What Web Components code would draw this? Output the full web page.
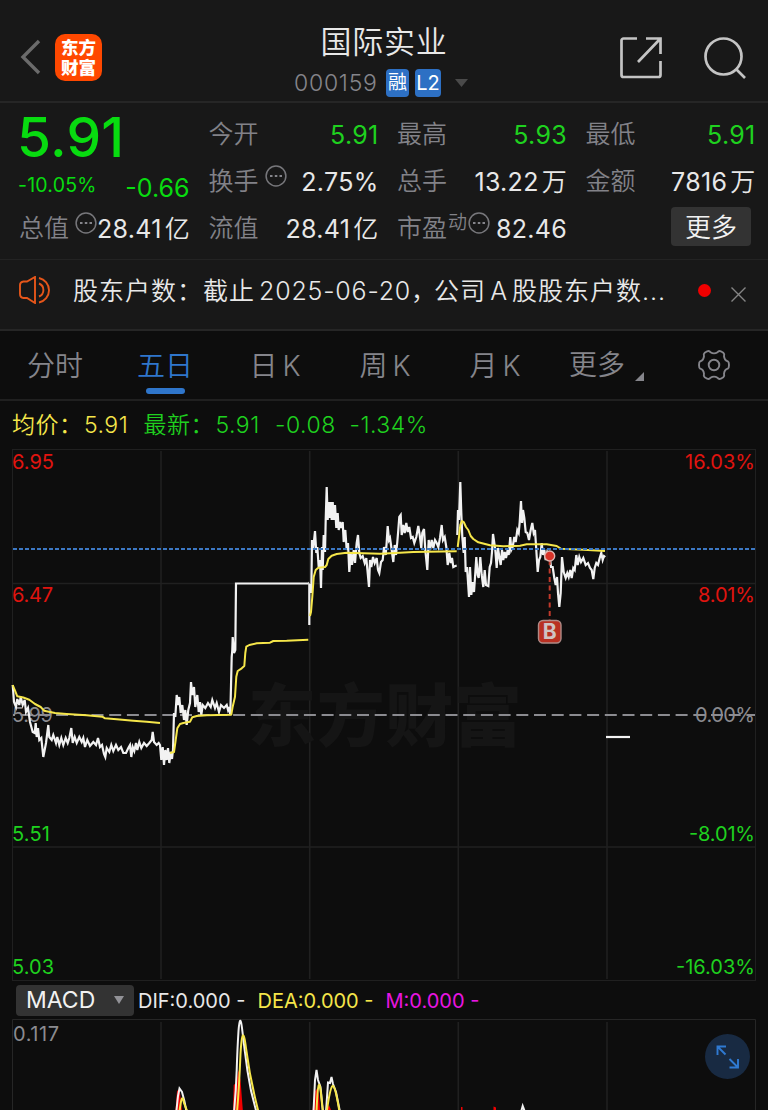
<!DOCTYPE html>
<html lang="zh-CN">
<head>
<meta charset="utf-8">
<title>国际实业 000159</title>
<style>
  body {
    margin: 0;
    background: #0d0d0d;
    color: #e8e8e8;
    font-family: Inter, "Noto Sans CJK SC", sans-serif;
    font-weight: 400;
    overflow: hidden;
  }
</style>
</head>
<body>
<stock-page></stock-page>

<script>
function define(name, html) {
  customElements.define(name, class extends HTMLElement {
    connectedCallback() {
      if (this.shadowRoot) return;
      this.attachShadow({ mode: "open" }).innerHTML = html;
    }
  });
}

// Top bar
define("stock-header", `
  <style>
    :host {
      display: flex;
      justify-content: space-between;
      height: 101px;
      background: #181818;
      border-bottom: 2px solid #262626;
    }
    .side { width: 180px; display: flex; align-items: center; box-sizing: border-box; padding-top: 13px; }
    .left { padding-left: 20px; gap: 14px; }
    .right { justify-content: flex-end; padding: 15px 22px 0 0; gap: 41px; }
    .logo {
      width: 47px; height: 47px; border-radius: 10px; background: #ff4800; color: #fff;
      font: 900 17.5px/20px "Noto Sans CJK SC", sans-serif;
      display: flex; flex-direction: column; align-items: center; justify-content: center;
    }
    .title { text-align: center; padding-top: 19px; }
    h1 { margin: 0; font-size: 31px; font-weight: 350; line-height: 46px; letter-spacing: .7px; }
    .code { display: flex; align-items: center; height: 35px; color: #85858b; font-size: 23px; padding-right: 6px; }
    .num { letter-spacing: .75px; margin-right: 8px; width: 84px; font-weight: 350; text-align: left; }
    .badge {
      background: #2d70c4; color: #fff; border-radius: 4px; height: 28px; line-height: 28px;
      font-size: 19px; width: 23px; margin-right: 6px; text-align: center;
    }
    .l2 { width: 26px; font-size: 20px; margin-right: 14px; }
  </style>
  <div class="side left">
    <svg width="21" height="36" viewBox="0 0 21 36" fill="none" stroke="#6b6b6b" stroke-width="3.4"><path d="M19 2 3 18l16 16"/></svg>
    <div class="logo"><span>东方</span><span>财富</span></div>
  </div>
  <div class="title">
    <h1>国际实业</h1>
    <div class="code">
      <span class="num">000159</span><span class="badge">融</span><span class="badge l2">L2</span>
      <svg width="13" height="8"><path d="M0 0h13L6.500 8z" fill="#4a4a4a"/></svg>
    </div>
  </div>
  <div class="side right">
    <svg width="44" height="44" viewBox="0 0 44 44" fill="none" stroke="#c4c4c4" stroke-width="2.700"><path d="M18 2.500H4.500a2 2 0 0 0-2 2V39a2 2 0 0 0 2 2h35a2 2 0 0 0 2-2V25M27 2.500h14.500V18M41 3 19 26"/></svg>
    <svg width="42" height="42" viewBox="0 0 42 42" fill="none" stroke="#c4c4c4" stroke-width="2.700"><circle cx="19.500" cy="19.500" r="18"/><path d="m32 32 9 9"/></svg>
  </div>
`);

// One label/value pair in the quote grid
define("quote-cell", `
  <style>
    :host { display: flex; justify-content: space-between; align-items: center; height: 47px; font-size: 25px; white-space: nowrap; }
    .label { display: flex; align-items: center; color: #828288; font-weight: 350; font-family: "Noto Sans CJK SC", sans-serif; line-height: 36px; margin-top: -5px; }
    .value { font-size: 25px; letter-spacing: .3px; margin-right: -.5px; line-height: 36px; }
    ::slotted(i) { font-style: normal; font-weight: 350; margin-left: 3px; }
  </style>
  <span class="label"><slot name="label"></slot></span>
  <span class="value"><slot></slot></span>
`);

define("more-dots", `
  <style>:host { display: block; height: 22px; width: 22px; margin: -6px 0 0 6px; } svg { display: block; }</style>
  <svg width="22" height="22" viewBox="0 0 22 22"><circle cx="11" cy="11" r="9.900" fill="none" stroke="#77777b" stroke-width="1.500"/><path d="M5 10h2.500v2H5zM9.800 10h2.500v2H9.800zM14.500 10H17v2h-2.500z" fill="#85858b"/></svg>
`);

define("quote-panel", `
  <style>
    :host {
      display: grid;
      grid-template-columns: repeat(4, 1fr);
      grid-template-rows: repeat(3, 47px);
      column-gap: 19px;
      height: 157px;
      padding: 8px 13px 0 19px;
      box-sizing: border-box;
      background: #181818;
      border-bottom: 1px solid #232323;
    }
    .now { grid-row: 1 / 3; color: #08dc10; }
    .price { font-size: 55px; font-weight: 550; line-height: 52px; height: 57px; letter-spacing: .3px; margin-left: -2px; white-space: nowrap; }
    .diff { display: flex; justify-content: space-between; align-items: center; line-height: 40px; font-size: 25px; }
    .diff small { font-size: 19.500px; margin: -6px 0 0 -1px; letter-spacing: .2px; }
    .down { color: #1fd11f; }
    sup { font-size: 19px; line-height: 20px; margin: -10px 0 0 1px; }
    more-dots.pe { margin-left: 1px; }
    .more {
      justify-self: end; align-self: center; width: 80px; height: 39px; margin: -4px 4px 0 0; border-radius: 4px;
      background: #333; color: #f2f2f2; font-size: 26px; line-height: 39px; text-align: center; font-weight: 350;
    }
    .more span { display: block; padding-top: 1px; }
  </style>
  <div class="now">
    <div class="price">5.91</div>
    <div class="diff"><small>-10.05%</small><span>-0.66</span></div>
  </div>
  <quote-cell><span slot="label">今开</span><span class="down">5.91</span></quote-cell>
  <quote-cell><span slot="label">最高</span><span class="down">5.93</span></quote-cell>
  <quote-cell><span slot="label">最低</span><span class="down">5.91</span></quote-cell>
  <quote-cell><span slot="label">换手</span><more-dots slot="label"></more-dots>2.75%</quote-cell>
  <quote-cell><span slot="label">总手</span>13.22<i>万</i></quote-cell>
  <quote-cell><span slot="label">金额</span>7816<i>万</i></quote-cell>
  <quote-cell><span slot="label">总值</span><more-dots slot="label"></more-dots>28.41<i>亿</i></quote-cell>
  <quote-cell><span slot="label">流值</span>28.41<i>亿</i></quote-cell>
  <quote-cell><span slot="label">市盈</span><sup slot="label">动</sup><more-dots slot="label" class="pe"></more-dots>82.46</quote-cell>
  <div class="more"><span>更多</span></div>
`);

define("notice-bar", `
  <style>
    :host { display: flex; align-items: center; height: 60px; padding: 0 20px 9px 19px; background: #181818; border-bottom: 2px solid #262626; }
    p { margin: -3px 0 0 20px; width: 605px; flex: none; font-size: 25px; font-weight: 350; letter-spacing: 1px; word-spacing: -4px; white-space: nowrap; }
    .date { letter-spacing: .8px; }
    .comma { letter-spacing: -2px; }
    .dot { width: 13px; height: 13px; border-radius: 50%; background: #f00000; margin: 0 20px; flex: none; }
    .close { margin-top: 9px; flex: none; }
    .horn { flex: none; }
  </style>
  <svg class="horn" width="34" height="28" viewBox="0 0 34 28" fill="none" stroke="#e6561a" stroke-width="1.900"><path d="M16 1v26l-8-5H4.500Q1 21.500 1 18V9q0-3 3.500-3.500H8zM20 7.500a7 7 0 0 1 0 13M20 2a12.500 12.500 0 0 1 0 24.500"/></svg>
  <p>股东户数：截止 <span class="date">2025-06-20</span><span class="comma">，</span>公司 A 股股东户数...</p>
  <span class="dot"></span>
  <svg class="close" width="15" height="15" viewBox="0 0 15 15" stroke="#858585" stroke-width="1.400"><path d="m.5.5 14 14m0-14-14 14"/></svg>
`);

define("period-tabs", `
  <style>
    :host {
      display: grid; grid-template-columns: repeat(6, 110px) 1fr; height: 68px;
      color: #85858b; font-size: 28px; font-weight: 350; border-bottom: 2px solid #202020;
    }
    div { display: flex; flex-direction: column; align-items: center; line-height: 70px; height: 68px; white-space: nowrap; word-spacing: -3px; }
    .on { color: #2f76cb; }
    .on::after { content: ""; width: 39px; height: 6px; border-radius: 3px; background: #2f76cb; margin-top: -13px; }
    .menu { flex-direction: row; justify-content: center; padding-left: 3px; }
    .menu svg { margin: 22px 0 0 10px; }
    .gear { justify-content: center; }
  </style>
  <div>分时</div>
  <div class="on">五日</div>
  <div>日 K</div>
  <div>周 K</div>
  <div>月 K</div>
  <div class="menu">更多<svg width="9" height="9"><path d="M9 0v9H0z" fill="#85858b"/></svg></div>
  <div class="gear">
    <svg width="32" height="32" viewBox="0 0 32 32" fill="none" stroke="#85858b" stroke-width="1.900"><circle cx="16" cy="16" r="5.300"/><path d="M12.500 3.200Q16 5.500 19.500 3.200Q20.800 1.300 22.800 2.300L25.300 3.800Q26.800 5 26 7.200Q26.400 11.500 29.800 12.300Q31 13 31 16T29.800 19.700Q26.400 20.500 26 24.800Q26.800 27 25.300 28.200L22.800 29.700Q20.800 30.700 19.500 28.800Q16 26.500 12.500 28.800Q11.200 30.700 9.200 29.700L6.700 28.200Q5.200 27 6 24.800Q5.600 20.500 2.200 19.700Q1 19 1 16T2.200 12.300Q5.600 11.500 6 7.200Q5.200 5 6.700 3.800L9.200 2.300Q11.200 1.300 12.500 3.200Z"/></svg>
  </div>
`);

define("price-legend", `
  <style>
    :host { display: flex; align-items: center; height: 48px; padding-left: 12px; font-size: 23px; font-weight: 350; white-space: nowrap; color: #1fd11f; }
    .avg { color: #f5e64a; }
    .k { width: 72px; margin-top: -4px; }
    .v { width: 59.500px; }
    .d { width: 74.500px; }
    span { letter-spacing: .5px; }
  </style>
  <span class="avg k">均价：</span><span class="avg v">5.91</span>
  <span class="k">最新：</span><span class="v">5.91</span>
  <span class="d">-0.08</span><span>-1.34%</span>
`);

// Five-day price lines, in page-wide units with the plot starting at y = 449
const PRICE = [
  "12.7,685 14,702 16,707 17.300,699 19.300,705 20.700,697 22.700,705 24.700,700 26,712 28,708 30,722 32.700,732 34.700,733 35.700,723 36.700,737 38,728 39.300,740 41.300,738 43.300,757 46,743 48.300,725 49.300,737 51.700,740 53.300,735 56,743 57.300,737 59.300,745 61.300,738 63.300,745 65.700,738 67.700,743 69.300,738 71.300,728 72.700,743 74.700,737 76.700,743 79.300,737 81.700,742 83.300,738 85,747 87.300,740 90,746 93.300,742 96,745 98,738 100,747 102,745 104,754 105.300,757 106.700,748 109.300,752 111.300,745 113.300,751 116,745 118.300,750 121,747 123.300,753 126,753 128.300,748 130,745 131.300,757 132.700,747 134.300,751 136,743 137.300,750 139.300,742 141.300,748 144,743 146.700,746 149.300,743 151.700,740 152.700,732 154,742 156.700,745 158.700,743 160,745 161.300,760 162.700,747 164,765 165.300,750 166.700,760 168,748 169.300,763 170.700,752 172,759 173,750 174,713 175.300,717 176.700,695 178,705 179.300,697 180.700,713 182.300,705 184,720 185.300,710 186.700,725 188.300,710 190,703 191,682 192.300,695 194,687 195.300,707 197.300,695 198.700,712 200,702 201.300,715 202.700,705 205.300,708 208,703 210.700,707 212.300,700 215,708 216.700,703 219,712 221,705 224,708 226.700,705 228,710 229,707 230.300,715 231.700,657 232.300,650 232.700,637 234,653 235.300,650 236,583.500 308.500,583.500",
  "309.300,625 309.300,585 310.700,587 311.300,593 312,540 313.300,548 315,531 316.300,553 317.300,547 318.700,567 320,560 321,588 322,547 322.700,570 323.700,535 325,552 325.700,520 326.700,487 327.700,520 328.700,502 329.700,518 330.700,502 331.700,520 332.700,502 333.700,520 335,505 336.300,528 337.700,513 338.700,530 340,522 341.300,528 342.700,522 343.700,542 345.300,530 346.700,550 348,543 349.300,572 350.700,553 352,565 353.700,550 355,563 356.700,543 358,535 359.300,553 360.700,558 362.700,556 364.700,563 366.300,558 367.700,573 369,587 370,560 371.300,567 373,557 374.700,563 376.700,558 378,570 379.300,573 381,562 382.700,560 384,547 385.700,555 386.700,542 387.700,526 389,540 390,538 391.700,550 393.300,562 394.700,545 396,555 397.300,542 398.300,530 399.300,517 400.700,515 401.700,535 403.300,525 404.700,533 406.300,523 407.700,532 409.300,527 411,538 412.700,537 414.300,543 416.300,537 418.300,526 419.700,535 421.300,548 422.300,533 424,529 425.300,550 427.300,570 428.700,540 430,550 431.700,540 433.300,548 435,540 436.700,543 438.300,547 440,538 441.700,525 443,540 444.700,537 446.300,547 447.700,565 449.300,553 450.700,563 452,558 453.300,567 455.300,566 456.700,565.700",
  "457.300,535 458,510 459,520 460.300,482 461.300,513 462.300,537 463.700,553 464.700,537 465.700,572 467,567 469,597 470,567 471.300,595 472.700,582 474,592 475.300,573 476.300,557 477.700,575 478.700,578 480.300,557 481.700,575 483.300,587 484.700,570 486,585 488.300,586 489.700,567 491,563 492,552 493,534 494.300,543 495.300,550 496.700,568 498,548 499.300,557 500.700,565 502,550 503.300,560 504.700,552 506,558 507.700,550 508.700,555 510.300,537 511.300,550 512.700,547 514.300,537 515.700,542 517.300,530 518.700,533 519.700,522 521,501 522,523 523,510 524.300,518 525.700,532 527.300,533 529,540 530.700,530 532.300,523 533.700,533 535,530 536.300,550 537.700,572 539,560 540.300,557 541.700,543 543,555 544.300,550 545.700,560 547.300,552 549.700,556 551,567 552.700,567 554.300,578 555.700,585 557,577 558,593 559.300,607 560.700,593 562,557 563.700,572 565.700,578 567.300,573 568.700,577 570.300,570 571.700,578 573.300,568 574.700,570 576.300,555 577.700,565 579.300,557 581,562 583.300,558 585.700,565 588,563 590,568 591.700,570 593.300,579 594.700,568 596.300,563 598,565 599.700,558 601.300,553 602.700,560 604,556 605.300,557",
  "606,737 630,737"
];

const AVERAGE = [
  "12.7,685 15,690.700 17.300,696.300 23.300,697.500 29.300,699.700 35,704 40.700,707 44,710.700 55,713 66.700,714 86.700,715.300 102.300,716.700 105,718.300 116.700,719.300 133.300,720.700 146.700,721.700 160,723",
  "170,753 174,752 175.700,740 177.300,728.300 180,724 183.300,723 190,721.700 192.300,717.300 196.700,716 206.700,715.300 231.300,714.700 232.700,706.700 235,696.700 236.300,676.700 237.700,671 241.700,668.300 244.300,666 245.300,653 246.300,646.700 249.300,645 256.700,643.300 270,642.700 273.300,641 286.700,640.700 308.300,639.700",
  "310,616 311,612 312.300,597 313.700,577 315.700,570 318.300,567.700 325,567 326.700,565 328.300,559 331.700,555.700 336.700,554 346.700,552.700 380,553.700 400,552.700 413.300,552 456.700,551.300",
  "457.700,547 459,537 460.300,525 462,521 463.700,522 466,527 468.300,530 470.700,536 473.300,539 478.300,542.300 490,545.300 503.300,546.300 520,545.700 526.700,544.300 546.700,544.300 556.700,546 560.700,548.700 583.300,549.700 605,551"
];

const lines = (list) => list.map((points) => `<polyline points="${points}"/>`).join("");

const scale = [
  ["6.95", "16.03%", 462, "#e0140f", 42, 70],
  ["6.47", "8.01%", 594.500, "#e0140f", 41, 57],
  ["5.99", "0.00%", 715, "#8b8b90", 41, 60],
  ["5.51", "-8.01%", 834, "#1fd11f", 38, 66],
  ["5.03", "-16.03%", 967, "#1fd11f", 42, 79]
].map(([price, pct, y, color, w1, w2]) => `
  <text x="12" y="${y + 7}" fill="${color}" textLength="${w1}">${price}</text>
  <text x="755" y="${y + 7}" fill="${color}" text-anchor="end" textLength="${w2}">${pct}</text>
`).join("");

define("price-chart", `
  <style>
    :host { display: block; height: 532px; }
    svg { display: block; }
    text { font-size: 20px; font-weight: 400; }
    .mark { font: 900 68px "Noto Sans CJK SC", sans-serif; }
  </style>
  <svg width="768" height="532" viewBox="0 449 768 532">
    <g stroke="#202020" fill="none">
      <rect x="12.500" y="449.500" width="743" height="531"/>
      <path d="M13 583.500h742M13 847h742M161 451v528M309.700 451v528M458.300 451v528M607 451v528" stroke-width="1.600"/>
    </g>
    <text class="mark" x="248" y="741" fill="#151515" textLength="274">东方财富</text>
    <path d="M13 715h742" stroke="#8b8b90" stroke-width="1.800" stroke-dasharray="12 5.700" stroke-dashoffset="10"/>
    ${scale}
    <g fill="none" stroke-width="2" stroke-linejoin="round">
      <g stroke="#f2f2f2" stroke-width="2.200" stroke-linejoin="miter">${lines(PRICE)}</g>
      <g stroke="#f5e64a">${lines(AVERAGE)}</g>
    </g>
    <path d="M13 549h742" stroke="#3c78c3" stroke-width="1.900" stroke-dasharray="4 2"/>
    <path d="M549.700 560v60" stroke="#c0392b" stroke-width="2" stroke-dasharray="5 3.500"/>
    <circle cx="549.700" cy="556" r="5" fill="#d93328" stroke="#dfb5b0" stroke-width="1.400"/>
    <rect x="538.500" y="620.500" width="22.500" height="22.500" rx="4.500" fill="#b93022" stroke="#b08a86" stroke-width="1.400"/>
    <text x="549.700" y="639" text-anchor="middle" fill="#cfc3c3" style="font-size:21px;font-weight:700">B</text>
  </svg>
`);

define("indicator-bar", `
  <style>
    :host { display: flex; align-items: center; height: 38px; padding-left: 16px; font-size: 20px; font-weight: 400; white-space: nowrap; }
    .pick { display: flex; align-items: center; justify-content: space-between; box-sizing: border-box; width: 118px; height: 31px; padding: 0 10px; margin-right: 4px; background: #333; border-radius: 4px; font-size: 23px; color: #f2f2f2; }
    span { letter-spacing: 0; padding-top: 2px; }
    .dif { width: 119.500px; }
    .dea { width: 128px; color: #f5e64a; }
    .m { color: #e815e0; }
  </style>
  <div class="pick">MACD<svg width="10" height="8"><path d="M0 0h10L5 8z" fill="#929297"/></svg></div>
  <span class="dif">DIF:0.000 -</span><span class="dea">DEA:0.000 -</span><span class="m">M:0.000 -</span>
`);

define("macd-chart", `
  <style>
    :host { display: block; height: 91px; position: relative; }
    svg { display: block; }
    text { font-size: 20px; font-weight: 400; }
    .full { position: absolute; right: 18px; top: 15px; }
  </style>
  <svg width="768" height="91" viewBox="0 1019 768 91">
    <path d="M12.500 1110v-90.500h743v90.500" stroke="#262626" fill="none"/>
    <path d="M161 1022v88M309.700 1022v88M458.300 1022v88M607 1022v88" stroke="#202020" stroke-width="1.600"/>
    <text x="13" y="1041" fill="#8b8b90" textLength="46">0.117</text>
    <path fill="#f00000" d="M175.500 1110 177 1091 179.500 1089 182 1110zM233 1110l.7-25 2.300-2 2.500-13 2 10 2.300 30zM312.500 1110l2-18 3-4 1.500 8 1 14zM327 1110l2-5 2 5zM461 1107h1.500v3H461zM493.500 1106.500l2.500 1v2.500h-2.500z"/>
    <g fill="none" stroke="#f2f2f2" stroke-width="2">
      <path d="M176.300 1112 178 1096 179.500 1088.500 182 1092Q185 1102 186.500 1112"/>
      <path d="M234 1112Q236 1092 236.700 1070T238.500 1031Q240 1012 242 1028Q244.500 1050 247.500 1071T256.500 1112"/>
      <path d="M313.500 1112 315 1080 316.500 1070 318 1080 320.500 1087 323 1112"/>
      <path d="M326 1112 328 1082.500 330 1083 331.500 1077 333 1084 336 1092 340 1112"/>
      <path d="M521 1112 522.700 1106 525 1112"/>
    </g>
    <g fill="none" stroke="#f5e64a" stroke-width="2">
      <path d="M179.500 1112Q182 1090 184 1103L187.500 1112"/>
      <path d="M237 1112Q239 1090 240.500 1054Q242.500 1020 246 1048Q250 1079 258.500 1112"/>
      <path d="M316.500 1112Q318.500 1062 322 1104L323 1112"/>
      <path d="M326.700 1112Q330 1088 332.500 1086T339.500 1112"/>
    </g>
  </svg>
  <svg class="full" width="45" height="45" viewBox="0 0 45 45"><circle cx="22.500" cy="22.500" r="22.500" fill="#182a42"/><path d="M21 12.500h-8.500V21M12.500 12.500l8 8M24.500 33.500H33V25M33 33.500l-8.500-8.500" fill="none" stroke="#2f7ad2" stroke-width="1.900"/></svg>
`);

define("stock-page", `
  <style>:host { display: flex; flex-direction: column; width: 768px; height: 1110px; overflow: hidden; }</style>
  <stock-header></stock-header>
  <quote-panel></quote-panel>
  <notice-bar></notice-bar>
  <period-tabs></period-tabs>
  <price-legend></price-legend>
  <price-chart></price-chart>
  <indicator-bar></indicator-bar>
  <macd-chart></macd-chart>
`);
</script>
</body>
</html>
